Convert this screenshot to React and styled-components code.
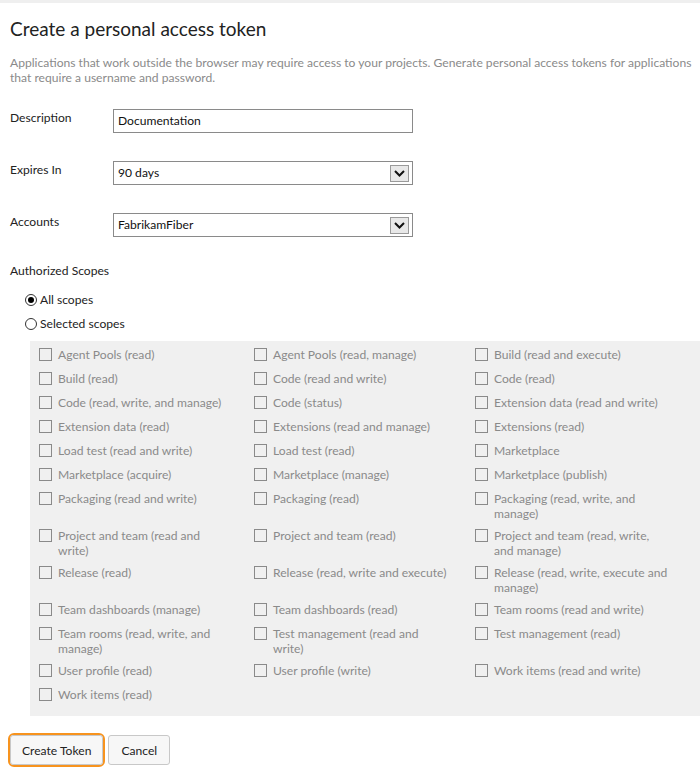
import React from "react";
import styled, { createGlobalStyle } from "styled-components";

const Global = createGlobalStyle`
  html, body { margin: 0; padding: 0; background: #fff; }
  body { font-family: "Lato", "Open Sans", sans-serif; color: #222; }
  * { box-sizing: border-box; }
`;

const Page = styled.div`
  width: 700px;
  display: flex;
  flex-direction: column;
`;

const TopStrip = styled.div`
  height: 3px;
  background: #efefef;
`;

const Content = styled.div`
  padding: 13px 0 0 10px;
  display: flex;
  flex-direction: column;
`;

const Title = styled.h1`
  margin: 0;
  font-weight: 400;
  font-size: 19px;
  line-height: 26px;
  color: #222;
`;

const Intro = styled.p`
  margin: 13px 0 0;
  font-size: 12.1px;
  line-height: 15px;
  color: #8a8a8a;
  padding-right: 4px;
`;

const FieldRow = styled.div`
  display: flex;
  align-items: flex-start;
  margin-top: ${(p) => p.$mt}px;
`;

const Label = styled.div`
  width: 103px;
  font-size: 12.1px;
  line-height: 18px;
  color: #222;
`;

const TextBox = styled.div`
  width: 300px;
  height: 24px;
  border: 1px solid #8a8a8a;
  font-size: 12.1px;
  line-height: 22px;
  padding: 0 4px;
  color: #111;
  display: flex;
  align-items: center;
  justify-content: space-between;
`;

const ArrowBox = styled.span`
  width: 19px;
  height: 17px;
  border: 1px solid #9a9a9a;
  background: #e8e8e8;
  display: flex;
  align-items: center;
  justify-content: center;
  margin-right: -1px;
`;

const SectionLabel = styled.div`
  margin-top: 26px;
  font-size: 12.1px;
  line-height: 16px;
  color: #222;
`;

const RadioGroup = styled.div`
  margin-top: 13px;
  padding-left: 15px;
  display: flex;
  flex-direction: column;
  gap: 8px;
`;

const RadioRow = styled.div`
  display: flex;
  align-items: center;
  gap: 3px;
  font-size: 12.1px;
  line-height: 16px;
  color: #222;
`;

const RadioCircle = styled.span`
  width: 12px;
  height: 12px;
  border-radius: 50%;
  border: 1px solid #333;
  background: #fff;
  display: flex;
  align-items: center;
  justify-content: center;
  &::after {
    content: "";
    width: 6px;
    height: 6px;
    border-radius: 50%;
    background: ${(p) => (p.$checked ? "#000" : "transparent")};
  }
`;

const ScopePanel = styled.div`
  margin: 9px 0 0 20px;
  background: #f0f0f0;
  padding: 2px 0 9px 9px;
  display: grid;
  grid-template-columns: 215px 221px 1fr;
`;

const ScopeItem = styled.label`
  display: flex;
  align-items: flex-start;
  gap: 6px;
  min-height: 24px;
  padding: 4px 0 3px;
  font-size: 12.1px;
  line-height: 15px;
  color: #8a8a8a;
`;

const Box = styled.span`
  flex: none;
  width: 13px;
  height: 13px;
  border: 1px solid #8a8a8a;
  margin-top: 1px;
`;

const ScopeText = styled.span`
  max-width: 175px;
`;

const Buttons = styled.div`
  display: flex;
  align-items: center;
  gap: 3px;
  margin-top: 17px;
  margin-left: -2px;
`;

const FocusRing = styled.div`
  border: 2px solid #f7931e;
  border-radius: 6px;
  display: flex;
`;

const Button = styled.button`
  font-family: inherit;
  font-size: 12.1px;
  color: #222;
  background: #f7f7f7;
  border: 1px solid #c8c8c8;
  border-radius: 3px;
  height: 30px;
  padding: 0 ${(p) => p.$px}px;
  cursor: pointer;
`;

const scopes = [
  "Agent Pools (read)", "Agent Pools (read, manage)", "Build (read and execute)",
  "Build (read)", "Code (read and write)", "Code (read)",
  "Code (read, write, and manage)", "Code (status)", "Extension data (read and write)",
  "Extension data (read)", "Extensions (read and manage)", "Extensions (read)",
  "Load test (read and write)", "Load test (read)", "Marketplace",
  "Marketplace (acquire)", "Marketplace (manage)", "Marketplace (publish)",
  "Packaging (read and write)", "Packaging (read)", "Packaging (read, write, and manage)",
  "Project and team (read and write)", "Project and team (read)", "Project and team (read, write, and manage)",
  "Release (read)", "Release (read, write and execute)", "Release (read, write, execute and manage)",
  "Team dashboards (manage)", "Team dashboards (read)", "Team rooms (read and write)",
  "Team rooms (read, write, and manage)", "Test management (read and write)", "Test management (read)",
  "User profile (read)", "User profile (write)", "Work items (read and write)",
  "Work items (read)",
];

const Chevron = () => (
  <svg width="11" height="7" viewBox="0 0 11 7">
    <path d="M1 1 L5.5 5.5 L10 1" fill="none" stroke="#111" strokeWidth="2" />
  </svg>
);

export default function App() {
  return (
    <Page>
      <Global />
      <TopStrip />
      <Content>
        <Title>Create a personal access token</Title>
        <Intro>
          Applications that work outside the browser may require access to your projects. Generate personal access tokens for applications that require a username and password.
        </Intro>
        <FieldRow $mt={24}>
          <Label>Description</Label>
          <TextBox>Documentation</TextBox>
        </FieldRow>
        <FieldRow $mt={28}>
          <Label>Expires In</Label>
          <TextBox>
            90 days
            <ArrowBox><Chevron /></ArrowBox>
          </TextBox>
        </FieldRow>
        <FieldRow $mt={28}>
          <Label>Accounts</Label>
          <TextBox>
            FabrikamFiber
            <ArrowBox><Chevron /></ArrowBox>
          </TextBox>
        </FieldRow>
        <SectionLabel>Authorized Scopes</SectionLabel>
        <RadioGroup>
          <RadioRow><RadioCircle $checked />All scopes</RadioRow>
          <RadioRow><RadioCircle />Selected scopes</RadioRow>
        </RadioGroup>
        <ScopePanel>
          {scopes.map((s) => (
            <ScopeItem key={s}>
              <Box />
              <ScopeText>{s}</ScopeText>
            </ScopeItem>
          ))}
        </ScopePanel>
        <Buttons>
          <FocusRing>
            <Button $px={11}>Create Token</Button>
          </FocusRing>
          <Button $px={12}>Cancel</Button>
        </Buttons>
      </Content>
    </Page>
  );
}
